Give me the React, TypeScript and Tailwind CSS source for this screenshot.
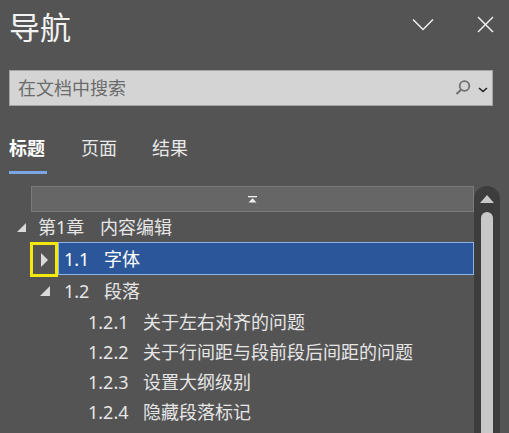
import React from "react";

const font = { fontFamily: '"Noto Sans", "Noto Sans CJK SC", sans-serif' };

function DownTri({ size }: { size: number }) {
  return (
    <svg width={size} height={size} viewBox="0 0 10 10">
      <polygon points="10,0 10,10 0,10" fill="#d9d9d9" />
    </svg>
  );
}

export default function App() {
  const subs = [
    ["1.2.1", "关于左右对齐的问题"],
    ["1.2.2", "关于行间距与段前段后间距的问题"],
    ["1.2.3", "设置大纲级别"],
    ["1.2.4", "隐藏段落标记"],
  ];
  return (
    <div
      className="w-[509px] h-[433px] bg-[#545454] overflow-hidden text-[#e6e6e6]"
      style={font}
    >
      {/* header */}
      <div className="h-[54px] flex items-start justify-between pl-[9px] pr-[15px]">
        <div className="mt-[7px] text-[31px] leading-[40px] text-[#f2f2f2]">导航</div>
        <div className="flex items-start mt-[16px]">
          <svg width="22" height="14" viewBox="0 0 22 14" className="mt-[2px]">
            <polyline points="1,1.5 11,11.5 21,1.5" fill="none" stroke="#f0f0f0" strokeWidth="1.5" />
          </svg>
          <svg width="17" height="17" viewBox="0 0 17 17" className="ml-[43px]">
            <line x1="1" y1="1" x2="16" y2="16" stroke="#f0f0f0" strokeWidth="1.5" />
            <line x1="16" y1="1" x2="1" y2="16" stroke="#f0f0f0" strokeWidth="1.5" />
          </svg>
        </div>
      </div>

      {/* search */}
      <div className="mt-[16px] ml-[9px] w-[484px] h-[36px] bg-[#d4d4d4] border border-[#a3a3a3] flex items-center pl-[8px] pr-[4px]">
        <div className="flex-1 text-[18px] leading-[24px] text-[#6b6b6b]">在文档中搜索</div>
        <svg width="16" height="16" viewBox="0 0 16 16">
          <circle cx="9.5" cy="6" r="4.8" fill="none" stroke="#707070" strokeWidth="1.8" />
          <line x1="6.2" y1="9.5" x2="1.5" y2="14" stroke="#707070" strokeWidth="2" />
        </svg>
        <svg width="10" height="6" viewBox="0 0 10 6" className="ml-[7px] mt-[3px]">
          <polyline points="1,1 5,4.5 9,1" fill="none" stroke="#222" strokeWidth="1.6" />
        </svg>
      </div>

      {/* tabs */}
      <div className="mt-[30px] pl-[9px] flex items-start">
        <div className="w-[38px] flex flex-col">
          <div className="text-[18px] leading-[24px] font-bold text-white">标题</div>
          <div className="mt-[11px] h-[3px] bg-[#7ba5e3]" />
        </div>
        <div className="ml-[34px] text-[18px] leading-[24px] text-[#e8e8e8]">页面</div>
        <div className="ml-[35px] text-[18px] leading-[24px] text-[#e8e8e8]">结果</div>
      </div>

      {/* tree area */}
      <div className="mt-[12px] h-[247px] flex">
        <div className="w-[474px] flex flex-col">
          <div className="ml-[31px] h-[26px] bg-[#666666] border border-[#7a7a7a] flex items-center justify-center">
            <svg width="9" height="7" viewBox="0 0 9 7">
              <rect x="0" y="0" width="9" height="1.3" fill="#f0f0f0" />
              <polygon points="4.5,2.2 8.5,6.5 0.5,6.5" fill="#f0f0f0" />
            </svg>
          </div>

          {/* 第1章 */}
          <div className="h-[30px] flex items-center text-[18px] leading-[24px]">
            <div className="w-[38px] pl-[17px] flex items-center">
              <DownTri size={9} />
            </div>
            <span className="w-[62px] whitespace-nowrap">第1章</span>
            <span>内容编辑</span>
          </div>

          {/* 1.1 selected */}
          <div className="h-[33px] flex items-start text-[18px] leading-[24px]">
            <div className="ml-[30px] w-[28px] h-[35px] border-[3px] border-[#f4e80c] flex items-center justify-center z-10">
              <svg width="7" height="14" viewBox="0 0 7 14">
                <polygon points="0,0 7,7 0,14" fill="#d9d9d9" />
              </svg>
            </div>
            <div className="flex-1 h-[33px] bg-[#2b579a] border border-[#8db3ea] flex items-center pl-[5px] text-white">
              <span className="w-[40px]">1.1</span>
              <span>字体</span>
            </div>
          </div>

          {/* 1.2 */}
          <div className="h-[31px] flex items-center text-[18px] leading-[24px]">
            <div className="w-[64px] pl-[40px] flex items-center">
              <DownTri size={10} />
            </div>
            <span className="w-[40px]">1.2</span>
            <span>段落</span>
          </div>

          {subs.map(([n, t], i) => (
            <div
              key={n}
              className={
                (i === 0 ? "h-[31px]" : "h-[30px]") +
                " flex items-center pl-[88px] text-[18px] leading-[24px] whitespace-nowrap"
              }
            >
              <span className="w-[55px]">{n}</span>
              <span>{t}</span>
            </div>
          ))}
        </div>

        {/* scrollbar */}
        <div className="w-[26px] bg-[#3d3d3d] rounded-t-[13px] flex flex-col items-center">
          <svg width="14" height="8" viewBox="0 0 14 8" className="mt-[9px]">
            <polygon points="7,0 14,8 0,8" fill="#c8c8c8" />
          </svg>
          <div className="mt-[9px] w-[12px] flex-1 bg-[#c8c8c8] rounded-t-[6px]" />
        </div>
      </div>
    </div>
  );
}
